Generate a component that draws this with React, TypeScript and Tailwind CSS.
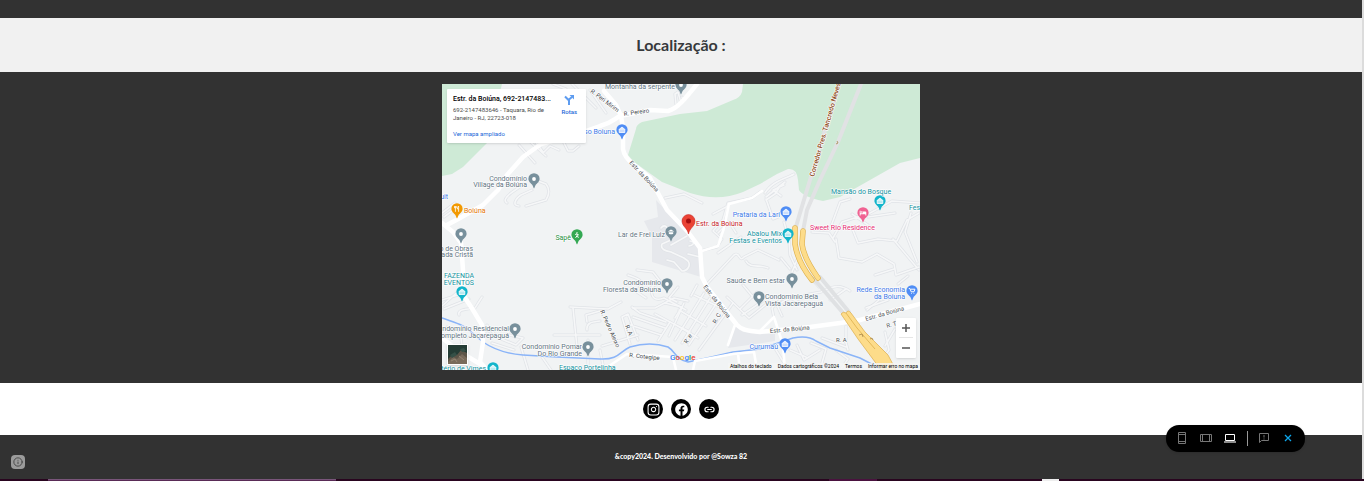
import type { ReactNode } from "react";
import { Instagram, Link2, Info } from "lucide-react";
import { FaFacebook } from "react-icons/fa";

const SLATE = "#78909c";
const BLUE = "#4f8df5";
const TEAL = "#12b5cb";

const minorRoads = [
  // north-west streets
  "M519 145 535 163M527 139 546 156M535 141 543 152M543 153 550 146 559 150M564 143 568 151 573 151 579 146",
  "M442 213 455 203M444 217 459 206",
  "M497 190 506 181 514 178M507 203C503 201 506 197 511 193L521 186M519 206C512 206 515 199 521 195L532 190M526 206 546 200C549 195 550 189 546 184L538 181",
  "M572 84 596 108M553 84 566 89M590 90 606 113",
  "M676 104 675 94 678 92 681 103M683 101 682 97",
  // around Lar de Frei Luiz
  "M661 228C664 224 668 226 668 232L671 240 662 244C660 249 665 251 671 252L684 258 688 261C691 265 688 271 682 271L674 262 667 260M671 245 687 236M690 241C697 242 692 246 689 246M688 254 700 257",
  "M665 198 684 194 702 203M718 253 741 237",
  // south centre grid
  "M628 275C637 278 642 280 641 285L637 292 646 298M637 270 653 272 660 281 652 287C650 299 656 301 664 298L673 303 686 310M633 308 655 308 674 298 688 301",
  "M655 314 670 322 658 341M632 307 640 313 666 322M633 317 665 328M630 325 661 335M622 317 628 314 638 340M622 317 630 344M602 346 638 335",
  "M694 295 717 306M675 340 704 293M682 343 710 298M689 345 716 304M699 350 733 303M670 322 690 332M679 310 706 326M676 325 698 338M684 303 669 336",
  "M665 303 682 307 675 318M697 285 691 296M678 287 669 298 677 302",
  // east of the main road
  "M700 251 717 247 722 239 713 231 723 220 728 203 752 198 760 192M713 214 728 206M718 233 729 222 736 233",
  "M707 284 734 255C740 251 739 263 744 257L758 250 779 260M746 261C750 269 760 264 768 268",
  "M765 193C773 180 788 178 794 174M766 197 785 182M766 200 775 194 779 188M766 199 773 219 778 217M781 196 773 190 784 185",
  "M784 222 789 240 790 255 797 270M781 258 790 269M792 272 797 260",
  "M830 229 840 202 850 199M833 238 842 222 870 213 892 201 920 203M812 232 829 233 835 242M836 239 839 258 862 262 877 254 894 264 896 275 919 267M852 228 858 243 878 239 897 241 907 220M893 239 919 270M852 214 868 225M868 217 895 213M907 220 919 213M911 213 905 232 917 262",
  "M805 295 821 292C833 286 840 284 850 291M830 300 846 289M866 308 888 300M810 277 819 287",
  "M885 332 889 350 883 358M846 326 846 339M822 338 846 347M845 339 848 350M885 346 895 329",
  "M774 318 772 308 784 296M782 316 777 305 790 298 801 303M797 345 804 360 820 350M820 370 826 349 811 343M776 350 784 363M790 350 806 357M836 350 848 359 841 369",
  "M867 310 879 300 876 291M898 284 908 276M875 275 894 269",
  // south-west streets
  "M442 300 461 294M444 309 469 299M442 306 463 287M459 315C457 309 468 309 475 308L482 297",
  "M487 333 516 345 523 338 509 335M492 343 514 350M487 325 497 337M447 327 467 337M460 330 462 346",
  "M570 307 608 309 621 302M573 308 577 347M554 335 600 335M588 340 588 369M587 330C586 322 593 322 600 321M587 322 586 315 600 311M600 350 604 370M542 357 551 370M521 347 528 370",
  "M740 309 757 292M742 315 763 301M749 318 769 302M727 297 749 318M743 285 753 297",
];

const mainRoads = [
  "M583 132 600 126C612 123 614 119 620 116L650 110 668 111C677 109 685 99 697 84",
  "M583 132 541 144 523 157 507 175 498 190 483 205 460 218 447 225",
  "M604 91 616 105 621 116 623 128 623 149C624 156 628 160 633 164L650 178 658 193 667 210 688 232 700 248 702 277 707 287 737 325C741 329 746 331 760 332L810 327 840 323 860 320 920 304",
  "M442 223 453 232 461 243 463 270 462 293 473 310 482 325 483 342 480 362 487 370",
  "M442 338 460 352 480 364",
];

const midRoads = [
  "M702 251 718 246 724 228 729 204 752 198 762 191",
  "M603 370 627 354 673 357 676 370M693 370 695 361 733 354 754 352 757 370M738 354 740 370",
  "M735 325 728 345M760 331 774 317 783 345 785 370",
];

const yellowRoads = [
  "M795 228 795 244C797 258 804 270 812 280",
  "M803 231 802 244C803 255 811 268 818 278",
];

type Glyph = "dot" | "bag" | "fork" | "bed" | "cart" | "walk" | "cap";

function PinGlyph({ kind }: { kind: Glyph }) {
  switch (kind) {
    case "bag":
      return <path d="M-2.800-1h5.600v3.500h-5.600zM-1.300-1v-1.100q1.300-1.500 2.600 0v1.100" fill="#fff" fillOpacity=".7" stroke="#fff" strokeWidth=".8" />;
    case "fork":
      return <path d="M-1.600-3v2.300M-1.600-.7v3.500M-2.400-3v2h1.600v-2M1.600 2.800V-3q-1.400 1-1.200 3h1.200" fill="none" stroke="#fff" strokeWidth=".8" />;
    case "bed":
      return <path d="M-3.300-2.300h.9v2.500H-.2v-1.800h2.500q1 0 1 1v3h-.9V1.300h-4.800v1.100h-.9zM-2-1a.8.8 0 1 0 1.600 0 .8.8 0 1 0-1.600 0" fill="#fff" />;
    case "cart":
      return <path d="M-3.200-2.500h1.100l1.300 3.300h2.800l.9-2.600h-4.300M-.8 2.400h.7M1.600 2.400h.7" fill="none" stroke="#fff" strokeWidth="1" />;
    case "walk":
      return <path d="M0-2.900v1M-.2-1.400l-1.600 1M-.2-1.400.2.5l-1.600 2.300M.2.5l1.200 2.300M0-1l1.800 1" fill="none" stroke="#fff" strokeWidth="1" />;
    case "cap":
      return <path d="M-3.300-.6 0-2.600l3.300 2zM-2.200.2h4.400v1.500q-2.200 1.200-4.400 0z" fill="#fff" />;
    default:
      return <circle r="1.900" fill="#fff" />;
  }
}

function Pin({ x, y, color, kind = "dot" }: { x: number; y: number; color: string; kind?: Glyph }) {
  return (
    <g transform={`translate(${x} ${y})`}>
      <path
        d="M0 9.500C-.5 9.500-.8 7.500-1.500 6.300-2.600 4.500-5.600 3-5.600-.2a5.600 5.600 0 0 1 11.200 0C5.600 3 2.600 4.500 1.500 6.300.8 7.500.5 9.500 0 9.500Z"
        fill={color}
      />
      <PinGlyph kind={kind} />
    </g>
  );
}

type LabelProps = { x: number; y: number; color?: string; end?: boolean; rotate?: number; children: ReactNode };

function Label({ x, y, color = "#5f7481", end = false, rotate = 0, children }: LabelProps) {
  return (
    <text
      transform={`translate(${x} ${y}) rotate(${rotate})`}
      textAnchor={end ? "end" : "start"}
      fill={color}
      stroke="#fff"
      strokeWidth="1.200"
      strokeLinejoin="round"
      paintOrder="stroke"
    >
      {children}
    </text>
  );
}

function MapDrawing() {
  const blueText = "#3b78e7";
  const tealText = "#12929e";
  const road = "#43484d";
  return (
    <svg
      viewBox="442 84 478 286"
      preserveAspectRatio="xMidYMid slice"
      className="block h-full w-full font-[Roboto,sans-serif] text-[7px]"
      role="img"
      aria-label="Mapa"
    >
      <rect x="442" y="84" width="478" height="286" fill="#f1f3f4" />
      <g fill="#ceead6">
        <path d="M442 84H502L487 143 463 167 452 174 442 176Z" />
        <path d="M743 84 742 92Q740 98 733 100L707 111 680 114 642 122Q636 125 636 129L632 142 628 155 634 162 662 182 690 193Q718 202 743 192L760 184 777 174 788 169Q797 168 798 180L799 190Q803 197 823 201L840 197 870 180 900 163 920 158V84Z" />
      </g>
      <g fill="#e6e8ec">
        <path d="M656 200 668 213 688 233 699 248 701 277 652 262V237L644 221 658 217Z" />
        <path d="M735 325 743 332 775 334V341L728 348Z" />
      </g>

      <g fill="none" strokeLinejoin="round" strokeLinecap="round">
        <g stroke="#e0e3e7" strokeWidth="3">
          {minorRoads.map((d) => <path key={d} d={d} />)}
        </g>
        <g stroke="#f6f7f8" strokeWidth="1.600">
          {minorRoads.map((d) => <path key={d} d={d} />)}
        </g>
        <path
          d="M442 318C459 324 464 325 470 331L483 342C496 351 510 354 523 355L557 357 600 359C619 360 620 351 630 347Q650 341 668 347C675 351 676 360 688 362L707 358 733 352 760 349 793 338Q808 335 816 341L830 348 860 358 883 370"
          stroke="#8ab4f8"
          strokeWidth="1.500"
        />
        <g stroke="#fff" strokeWidth="2.600">
          {midRoads.map((d) => <path key={d} d={d} />)}
        </g>
        <g stroke="#fff" strokeWidth="4.500">
          {mainRoads.map((d) => <path key={d} d={d} />)}
        </g>
        <path d="M839 84 810 180 800 213 795 230M861 84 838 142 820 180 807 210 803 231" stroke="#e1e2e4" strokeWidth="4" />
        <path d="M814 279 844 314M820 277 849 312" stroke="#dfe1e3" strokeWidth="4" />
        <g stroke="#dcae4b" strokeWidth="5.500">
          {yellowRoads.map((d) => <path key={d} d={d} />)}
        </g>
        <g stroke="#fddc8a" strokeWidth="4.300">
          {yellowRoads.map((d) => <path key={d} d={d} />)}
        </g>
      </g>
      <path
        d="M841 314Q843 311 846 313 848 309 851 313L865 332 888 355 896 370H881L858 339Z"
        fill="#fddc8a"
        stroke="#dcae4b"
        strokeWidth=".7"
      />
      <path d="M846 313 857 328 875 349" fill="none" stroke="#dcae4b" strokeWidth=".8" />
      <path d="m859 335 3-1 1 3M870 339l2-1 1 2M836 144l2-1-1-2" fill="none" stroke="#a4874b" strokeWidth=".8" />

      <Pin x={681} y={85} color={SLATE} />
      <Pin x={534} y={179} color={SLATE} />
      <Pin x={461} y={234} color={SLATE} />
      <Pin x={671} y={232} color={SLATE} kind="cap" />
      <Pin x={667} y={284} color={SLATE} />
      <Pin x={515} y={329} color={SLATE} />
      <Pin x={588} y={347} color={SLATE} />
      <Pin x={792} y={279} color={SLATE} />
      <Pin x={759} y={297} color={SLATE} />
      <Pin x={622} y={130} color={BLUE} kind="bag" />
      <Pin x={786} y={212} color={BLUE} kind="bag" />
      <Pin x={912} y={291} color={BLUE} kind="cart" />
      <Pin x={785} y={344} color={BLUE} kind="bag" />
      <Pin x={457} y={209} color="#f29900" kind="fork" />
      <Pin x={577} y={235} color="#34a853" kind="walk" />
      <Pin x={880} y={201} color={TEAL} kind="bag" />
      <Pin x={788} y={234} color={TEAL} kind="bag" />
      <Pin x={462} y={292} color={TEAL} kind="bag" />
      <Pin x={493} y={368} color={TEAL} kind="bag" />
      <Pin x={863} y={213} color="#f06292" kind="bed" />

      <Label x={605} y={89}>Montanha da serpente</Label>
      <Label x={527} y={181} end>Condomínio</Label>
      <Label x={527} y={187} end>Village da Boiúna</Label>
      <Label x={615} y={134} color={blueText} end>so Boiuna</Label>
      <Label x={448} y={199} color={blueText} end>uit</Label>
      <Label x={464} y={213} color="#e37400">Boiúna</Label>
      <Label x={473} y={251} end>o de Obras</Label>
      <Label x={473} y={257} end>ada Cristã</Label>
      <Label x={474} y={278} color={tealText} end>FAZENDA</Label>
      <Label x={474} y={285} color={tealText} end>EVENTOS</Label>
      <Label x={571} y={240} color="#1e8e3e" end>Sapê</Label>
      <Label x={665} y={237} end>Lar de Frei Luiz</Label>
      <Label x={696} y={226} color="#c5221f">Estr. da Boiúna</Label>
      <Label x={661} y={285} end>Condomínio</Label>
      <Label x={661} y={292} end>Floresta da Boiuna</Label>
      <Label x={780} y={217} color={blueText} end>Prataria da Lari</Label>
      <Label x={782} y={236} color={tealText} end>Abalou Mix</Label>
      <Label x={782} y={243} color={tealText} end>Festas e Eventos</Label>
      <Label x={831} y={194} color={tealText}>Mansão do Bosque</Label>
      <Label x={909} y={210} color={tealText}>Fes</Label>
      <Label x={810} y={230} color="#e52d74">Sweet Rio Residence</Label>
      <Label x={785} y={283} end>Saude e Bem estar</Label>
      <Label x={765} y={299}>Condomínio Bela</Label>
      <Label x={765} y={306}>Vista Jacarepaguá</Label>
      <Label x={905} y={292} color={blueText} end>Rede Economia</Label>
      <Label x={905} y={299} color={blueText} end>da Boiuna</Label>
      <Label x={778} y={349} color={blueText} end>Curumaú</Label>
      <Label x={509} y={331} end>ndomínio Residencial</Label>
      <Label x={509} y={338} end>ompleto Jacarepaguá</Label>
      <Label x={582} y={349} end>Condomínio Pomar</Label>
      <Label x={582} y={356} end>Do Rio Grande</Label>
      <Label x={559} y={370} color={tealText}>Espaço Portelinha</Label>
      <Label x={486} y={371} color={tealText} end>tério de Vimes</Label>

      <g fontSize="6">
        <Label x={590} y={92} rotate={37} color={road}>R. Peri Mirim</Label>
        <Label x={624} y={116} rotate={-8} color={road}>R. Pereiro</Label>
        <Label x={629} y={163} rotate={47} color={road}>Estr. da Boiúna</Label>
        <Label x={703} y={287} rotate={52} color={road}>Estr. da Boiúna</Label>
        <Label x={770} y={333} rotate={-5} color={road}>Estr. da Boiúna</Label>
        <Label x={866} y={321} rotate={-16} color={road}>Estr. da Boiúna</Label>
        <Label x={600} y={311} rotate={66} color={road}>R. Pedro Aleixo</Label>
        <Label x={625} y={326} rotate={68} color={road}>R. A</Label>
        <Label x={687} y={344} rotate={-58} color={road}>R. e</Label>
        <Label x={716} y={324} rotate={-62} color={road}>R. C</Label>
        <Label x={629} y={357} rotate={6} color={road}>R. Cotegipe</Label>
        <Label x={836} y={342} color={road}>R. A</Label>
        <Label x={887} y={328} rotate={-15} color={road}>R. T</Label>
      </g>
      <g fontWeight="500">
        <Label x={814} y={177} rotate={-74} color="#8d4b20">Corredor Pres. Tancredo Neves</Label>
      </g>

      <path d="M688.500 234C687.500 228 682 226.500 682 221a6.500 6.500 0 0 1 13 0C695 226.500 689.500 228 688.500 234Z" fill="#ea4335" stroke="#c5221f" strokeWidth=".5" />
      <circle cx="688.500" cy="221" r="2.500" fill="#a50e0e" />

      <text x="670" y="360" fontSize="8" fontWeight="500">
        <tspan fill="#4285f4">G</tspan>
        <tspan fill="#ea4335">o</tspan>
        <tspan fill="#fbbc04">o</tspan>
        <tspan fill="#4285f4">g</tspan>
        <tspan fill="#34a853">l</tspan>
        <tspan fill="#ea4335">e</tspan>
      </text>
    </svg>
  );
}

function PlaceCard() {
  return (
    <div className="absolute top-[5px] left-[5px] flex h-[54px] w-[139px] justify-between rounded-[1px] bg-white py-[5px] pr-[9px] pl-[6px] shadow-sm">
      <div className="flex flex-col whitespace-nowrap">
        <h2 className="text-[7px] leading-[10px] font-medium text-black">Estr. da Boiúna, 692-2147483...</h2>
        <p className="mt-[2px] text-[6px] leading-[8px] text-[#4b4b4b]">
          692-2147483646 - Taquara, Rio de
          <br />
          Janeiro - RJ, 22723-018
        </p>
        <a href="#mapa" className="mt-2 text-[6px] leading-[8px] text-[#1a67d8]">Ver mapa ampliado</a>
      </div>
      <a href="#rotas" className="flex flex-col items-center gap-[2px] text-[6px] leading-[8px] font-medium text-[#1a67d8]">
        <svg viewBox="0 0 12 12" className="h-3 w-3" fill="none" stroke="#5e9cf0" strokeWidth="2">
          <path d="M2 2.500 6 6.500V11M6 7V5.500L9 3" />
          <path d="M6.500 1H11v4.500Z" fill="#5e9cf0" stroke="none" />
        </svg>
        Rotas
      </a>
    </div>
  );
}

function MapPanel() {
  return (
    <section className="relative h-[286px] w-full max-w-[478px] overflow-hidden font-[Roboto,sans-serif]">
      <MapDrawing />
      <PlaceCard />
      <button type="button" aria-label="Satélite" className="absolute bottom-[5px] left-[5px] h-[21px] w-[21px] border border-white bg-[#263b34] shadow">
        <svg viewBox="0 0 19 19" className="h-full w-full">
          <path d="M0 0h19v19H0z" fill="#243c35" />
          <path d="M0 14 5 9l4 1 4-5 6 3v11H0z" fill="#5d5548" />
          <path d="m0 17 5-5 4 2 5-5 5 4v6H0z" fill="#796b5b" />
          <path d="m2 10 5-3 2 3-5 3zM12 4l4-1 2 3-4 1z" fill="#355047" />
          <path d="m3 16 4-2 2 3M11 11l5 4" stroke="#978775" fill="none" />
        </svg>
      </button>
      <div className="absolute right-1 bottom-3 flex w-5 flex-col rounded-[1px] bg-white px-[3px] shadow">
        <button type="button" aria-label="Aumentar zoom" className="flex h-5 items-center justify-center border-b border-[#e6e6e6]">
          <svg viewBox="0 0 10 10" className="h-[10px] w-[10px]"><path d="M1 5h8M5 1v8" stroke="#555" strokeWidth="1.500" /></svg>
        </button>
        <button type="button" aria-label="Diminuir zoom" className="flex h-5 items-center justify-center">
          <svg viewBox="0 0 10 10" className="h-[10px] w-[10px]"><path d="M1 5h8" stroke="#555" strokeWidth="1.500" /></svg>
        </button>
      </div>
      <div className="absolute right-0 bottom-0 flex h-[7px] items-center gap-[6px] bg-[#f5f5f5]/80 px-[2px] text-[5px] leading-[7px] whitespace-nowrap text-black">
        <button type="button">Atalhos do teclado</button>
        <span>Dados cartográficos ©2024</span>
        <a href="#termos">Termos</a>
        <a href="#erro">Informar erro no mapa</a>
      </div>
    </section>
  );
}

function SocialLinks() {
  const item = "flex h-5 w-5 items-center justify-center rounded-full bg-black text-white";
  return (
    <nav className="flex h-[52px] items-center justify-center gap-2 bg-white">
      <a href="#instagram" aria-label="Instagram" className={item}><Instagram size={13} strokeWidth={2} /></a>
      <a href="#facebook" aria-label="Facebook" className={item}><FaFacebook size={13} /></a>
      <a href="#link" aria-label="Link" className={item}><Link2 size={11} strokeWidth={2.5} /></a>
    </nav>
  );
}

function PreviewToolbar() {
  const button = "flex h-3 w-3 items-center justify-center";
  return (
    <div className="fixed right-[59px] bottom-[29px] flex h-[27px] w-[139px] items-center rounded-[13px] bg-black pr-[11px] pb-px pl-[10px] shadow">
      <div className="flex items-center gap-3">
        <button type="button" aria-label="Celular" className={button}>
          <svg viewBox="0 0 12 12" className="h-3 w-3" fill="none" stroke="#777"><path d="M2.500.5h7v11h-7zM2 2.500h8M2 9.500h8" /></svg>
        </button>
        <button type="button" aria-label="Tablet" className={button}>
          <svg viewBox="0 0 12 12" className="h-3 w-3" fill="none" stroke="#777"><path d="M.5 2.500h11v7H.5zM2.500 2v8M9.500 2v8" /></svg>
        </button>
        <button type="button" aria-label="Computador" className={button}>
          <svg viewBox="0 0 12 12" className="h-3 w-3" fill="none" stroke="#fff"><path d="M1.500 2.500h9v6h-9z" /><path d="M0 10h12" stroke="#bbb" strokeWidth="1.500" /></svg>
        </button>
      </div>
      <span className="ml-[11px] h-[15px] w-px bg-[#999]" />
      <button type="button" aria-label="Comentário" className="ml-[10px] flex h-3 w-3 items-center justify-center">
        <svg viewBox="0 0 12 12" className="h-3 w-3" fill="none" stroke="#777"><path d="M1.500 1.500h9v7H3.500l-2 2zM6 3v2.500M6 6.500v1" /></svg>
      </button>
      <button type="button" aria-label="Fechar" className="ml-auto flex h-3 w-3 items-center justify-center">
        <svg viewBox="0 0 12 12" className="h-3 w-3" stroke="#0ea5e9" strokeWidth="1.300"><path d="m3 3 6 6M9 3 3 9" /></svg>
      </button>
    </div>
  );
}

export default function App() {
  return (
    <div className="min-h-screen bg-[#323232] font-[Lato,sans-serif]">
      <div className="border-r-2 border-[#dcdcdc]">
        <div className="h-[18px] bg-[#323232]" />
        <header className="flex h-[54px] items-center justify-center bg-[#f1f1f1]">
          <h1 className="text-[16px] leading-6 font-bold text-[#37393c]">Localização :</h1>
        </header>
        <main className="flex justify-center bg-[#323232] pt-3 pb-[13px]">
          <MapPanel />
        </main>
        <SocialLinks />
        <footer className="flex h-11 items-center justify-center bg-[#323232] pb-[2px] text-[7px] leading-3 font-black text-white">
          &amp;copy2024. Desenvolvido por @Sowza 82
        </footer>
      </div>
      <div className="flex h-[2px] bg-[#29051f]">
        <span className="ml-[48px] w-72 border-t border-[#79557a] bg-[#592b56]" />
        <span className="ml-auto w-12 bg-[#4a123f]" />
        <span className="mr-[305px] ml-[165px] w-[17px] bg-[#eee]" />
      </div>
      <button type="button" aria-label="Informações" className="fixed bottom-3 left-[11px] flex h-[14px] w-[14px] items-center justify-center rounded-[4px] bg-[#9b9b9b] text-[#3c3c3c]">
        <Info size={10} strokeWidth={2} />
      </button>
      <PreviewToolbar />
    </div>
  );
}
